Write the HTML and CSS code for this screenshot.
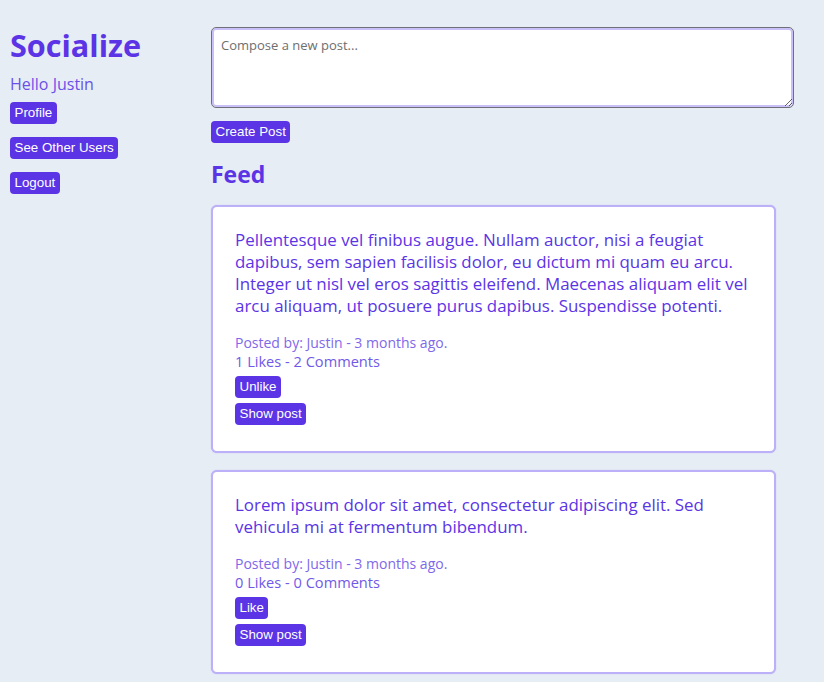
FILE: index.html
```html
<!DOCTYPE html>
<html lang="en">
<head>
<meta charset="utf-8">
<title>Socialize</title>
<link rel="stylesheet" href="styles.css">
</head>
<body>
<div class="page">
  <aside class="sidebar">
    <h1 class="brand">Socialize</h1>
    <p class="hello">Hello Justin</p>
    <nav class="nav">
      <button class="btn">Profile</button>
      <button class="btn">See Other Users</button>
      <button class="btn">Logout</button>
    </nav>
  </aside>
  <main class="main">
    <textarea class="compose" placeholder="Compose a new post..."></textarea>
    <div class="compose-actions"><button class="btn">Create Post</button></div>
    <h2 class="feed-title">Feed</h2>
    <div class="feed">
      <article class="card">
        <p class="post-text">Pellentesque vel finibus augue. Nullam auctor, nisi a feugiat dapibus, sem sapien facilisis dolor, eu dictum mi quam eu arcu. Integer ut nisl vel eros sagittis eleifend. Maecenas aliquam elit vel arcu aliquam, ut posuere purus dapibus. Suspendisse potenti.</p>
        <p class="meta">Posted by: Justin - 3 months ago.</p>
        <p class="stats">1 Likes - 2 Comments</p>
        <div class="actions">
          <button class="btn">Unlike</button>
          <button class="btn">Show post</button>
        </div>
      </article>
      <article class="card">
        <p class="post-text">Lorem ipsum dolor sit amet, consectetur adipiscing elit. Sed vehicula mi at fermentum bibendum.</p>
        <p class="meta">Posted by: Justin - 3 months ago.</p>
        <p class="stats">0 Likes - 0 Comments</p>
        <div class="actions">
          <button class="btn">Like</button>
          <button class="btn">Show post</button>
        </div>
      </article>
    </div>
  </main>
</div>
</body>
</html>
```

FILE: styles.css
```css
html, body {
  margin: 0;
  padding: 0;
}
body {
  background: #e6edf5;
  font-family: "Open Sans", "DejaVu Sans", sans-serif;
  color: #5b34e6;
  height: 682px;
  overflow: hidden;
}
.page {
  display: flex;
  padding: 27px 30px 0 10px;
}
.sidebar {
  width: 201px;
  flex: none;
  display: flex;
  flex-direction: column;
  align-items: flex-start;
}
.brand {
  margin: 0;
  font-size: 30.6px;
  line-height: 36px;
  font-weight: 700;
  color: #5b34e6;
}
.hello {
  margin: 11px 0 0;
  font-size: 16px;
  line-height: 20px;
  color: #6b50e8;
}
.nav {
  margin-top: 8px;
  display: flex;
  flex-direction: column;
  align-items: flex-start;
  gap: 13px;
}
.btn {
  font-family: "Liberation Sans", Arial, sans-serif;
  font-size: 13.33px;
  line-height: 16px;
  padding: 3px 4.5px;
  border: 0;
  border-radius: 4px;
  background: #5b34e6;
  color: #ffffff;
  cursor: pointer;
}
.main {
  flex: 1;
  min-width: 0;
}
.compose {
  display: block;
  box-sizing: border-box;
  width: 100%;
  height: 81px;
  margin: 0;
  padding: 8px 9px;
  border: 1px solid #6f6f78;
  border-radius: 5px;
  box-shadow: inset 0 0 0 2px #c9c0fa;
  background: #ffffff;
  font-family: "Open Sans", "DejaVu Sans", sans-serif;
  font-size: 13px;
  line-height: 18px;
  color: #333333;
  resize: vertical;
}
.compose::placeholder {
  color: #6e6e6e;
}
.compose-actions {
  margin-top: 13px;
  display: flex;
}
.feed-title {
  margin: 16px 0 0;
  font-size: 23px;
  line-height: 30px;
  font-weight: 700;
  color: #5b34e6;
}
.feed {
  margin-top: 16px;
  display: flex;
  flex-direction: column;
  gap: 17px;
  width: 565px;
}
.card {
  background: #ffffff;
  border: 2px solid #bcb0f9;
  border-radius: 6px;
  box-shadow: 0 0 1px rgba(140, 120, 245, 0.6);
  padding: 22px 18px 26px 22px;
}
.post-text {
  margin: 0;
  font-size: 16.9px;
  line-height: 22px;
  color: #5b34e6;
}
.meta {
  margin: 16px 0 0;
  font-size: 14px;
  line-height: 19px;
  color: #8068ea;
}
.stats {
  margin: 0;
  font-size: 14.6px;
  line-height: 19px;
  color: #7059e8;
}
.actions {
  margin-top: 5px;
  display: flex;
  flex-direction: column;
  align-items: flex-start;
  gap: 5px;
}
```
